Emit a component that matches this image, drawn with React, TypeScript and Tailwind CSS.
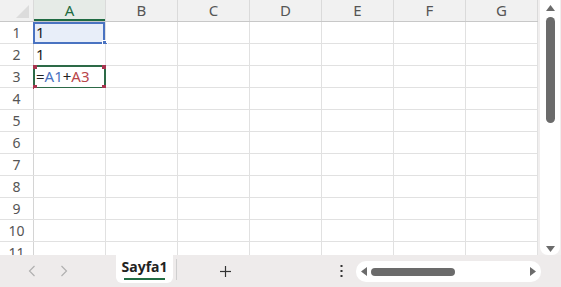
import React from "react";

const cols = ["A", "B", "C", "D", "E", "F", "G"];
const rows = [1, 2, 3, 4, 5, 6, 7, 8, 9, 10, 11];

function Cell({ r, c }: { r: number; c: string }) {
  const key = `${c}${r}`;
  let content: React.ReactNode = null;
  let bg = "bg-white";
  if (key === "A1") {
    content = <span>1</span>;
    bg = "bg-[#e8eef9]";
  } else if (key === "A2") {
    content = <span>1</span>;
  } else if (key === "A3") {
    content = (
      <span>
        =<span className="text-[#4a73c1]">A1</span>+<span className="text-[#b9464a]">A3</span>
      </span>
    );
  }
  return (
    <div
      className={`relative w-[72px] h-full shrink-0 border-r border-[#e1e1e1] ${bg} flex items-center pl-[2px] text-[15px] text-[#222]`}
    >
      {content}
      {key === "A1" && (
        <>
          <div className="absolute left-[-1px] top-[0px] w-[72px] h-[22px] border-2 border-[#4a73c1] pointer-events-none" />
          <div className="absolute left-[68px] top-[18px] w-[6px] h-[6px] bg-[#4a73c1] border border-white" />
        </>
      )}
      {key === "A3" && (
        <>
          <div className="absolute left-[-1px] top-[-1px] w-[73px] h-[24px] border-2 border-[#2d6a47] pointer-events-none" />
          <div className="absolute left-[-1px] top-[-1px] w-[4px] h-[4px] bg-[#a8344f]" />
          <div className="absolute left-[68px] top-[-1px] w-[4px] h-[4px] bg-[#a8344f]" />
          <div className="absolute left-[-1px] top-[19px] w-[4px] h-[4px] bg-[#a8344f]" />
          <div className="absolute left-[68px] top-[19px] w-[4px] h-[4px] bg-[#a8344f]" />
        </>
      )}
    </div>
  );
}

export default function App() {
  return (
    <div
      className="w-[561px] h-[287px] overflow-hidden bg-white flex flex-col"
      style={{ fontFamily: '"Noto Sans", "Open Sans", sans-serif' }}
    >
      <div className="flex h-[255px]">
        <div className="w-[538px] h-full overflow-hidden flex flex-col">
          {/* header row */}
          <div className="flex h-[22px] shrink-0 border-b border-[#c8c8c8] bg-[#f1f1f1]">
            <div className="relative w-[34px] h-full shrink-0 border-r border-[#dadada] bg-[#f1f1f1]">
              <svg className="absolute right-[4px] bottom-[3px]" width="13" height="13" viewBox="0 0 13 13">
                <polygon points="13,0 13,13 0,13" fill="#dcdcdc" />
              </svg>
            </div>
            {cols.map((c) => (
              <div
                key={c}
                className={`w-[72px] h-full shrink-0 border-r border-[#dadada] flex items-center justify-center text-[15px] ${
                  c === "A" ? "bg-[#e6ebe7] text-[#1f6b42] shadow-[inset_0_-2px_0_#1f6b42]" : "text-[#555]"
                }`}
              >
                {c}
              </div>
            ))}
          </div>
          {rows.map((r) => (
            <div key={r} className="flex h-[22px] shrink-0 border-b border-[#e1e1e1]">
              <div className="w-[34px] h-full shrink-0 border-r border-[#d4d4d4] flex items-center justify-center text-[14px] text-[#555] bg-white">
                {r}
              </div>
              {cols.map((c) => (
                <Cell key={c} r={r} c={c} />
              ))}
            </div>
          ))}
        </div>
        {/* vertical scrollbar */}
        <div className="flex-1 h-full bg-[#f0eeee] flex">
          <div className="ml-[2px] w-[20px] h-full bg-white rounded-b-[8px] flex flex-col items-center">
            <svg className="mt-[5px]" width="9" height="6" viewBox="0 0 9 6">
              <polygon points="4.5,0 9,6 0,6" fill="#6b6b6b" />
            </svg>
            <div className="mt-[6px] w-[9px] h-[106px] rounded-full bg-[#6b6b6b]" />
            <div className="flex-1" />
            <svg className="mb-[3px]" width="9" height="6" viewBox="0 0 9 6">
              <polygon points="0,0 9,0 4.5,6" fill="#6b6b6b" />
            </svg>
          </div>
        </div>
      </div>
      {/* bottom bar */}
      <div className="flex-1 bg-[#eeebeb] flex items-start">
        <div className="w-[116px] h-full flex items-center pl-[28px] gap-[24px] text-[#b5b5b5]">
          <svg width="8" height="12" viewBox="0 0 8 12">
            <polyline points="6.5,1 1.5,6 6.5,11" fill="none" stroke="#b0b0b0" strokeWidth="1.2" />
          </svg>
          <svg width="8" height="12" viewBox="0 0 8 12">
            <polyline points="1.5,1 6.5,6 1.5,11" fill="none" stroke="#b0b0b0" strokeWidth="1.2" />
          </svg>
        </div>
        <div className="w-[57px] h-[28px] bg-white rounded-b-[6px] flex flex-col items-center pt-[3px]">
          <span className="text-[14px] font-bold text-[#222] leading-[18px]">Sayfa1</span>
          <div className="w-[41px] h-[2px] bg-[#1f6b42] mt-[2px]" />
        </div>
        <div className="ml-[3px] mt-[4px] w-[1px] h-[21px] bg-[#cfcfcf]" />
        <div className="w-[96px] h-full flex items-center justify-center">
          <svg width="11" height="11" viewBox="0 0 11 11">
            <line x1="5.5" y1="0" x2="5.5" y2="11" stroke="#333" strokeWidth="1.2" />
            <line x1="0" y1="5.5" x2="11" y2="5.5" stroke="#333" strokeWidth="1.2" />
          </svg>
        </div>
        <div className="flex-1" />
        <div className="w-[30px] h-full flex items-center justify-center">
          <svg width="3" height="12" viewBox="0 0 3 12">
            <rect x="0.5" y="0" width="2" height="2" fill="#333" />
            <rect x="0.5" y="5" width="2" height="2" fill="#333" />
            <rect x="0.5" y="10" width="2" height="2" fill="#333" />
          </svg>
        </div>
        <div className="mt-[6px] mr-[20px] w-[185px] h-[21px] bg-white rounded-[10px] flex items-center pl-[5px] pr-[5px]">
          <svg width="6" height="9" viewBox="0 0 6 9">
            <polygon points="6,0 6,9 0,4.5" fill="#6b6b6b" />
          </svg>
          <div className="ml-[4px] w-[84px] h-[8px] rounded-full bg-[#6b6b6b]" />
          <div className="flex-1" />
          <svg width="6" height="9" viewBox="0 0 6 9">
            <polygon points="0,0 6,4.5 0,9" fill="#6b6b6b" />
          </svg>
        </div>
      </div>
    </div>
  );
}
